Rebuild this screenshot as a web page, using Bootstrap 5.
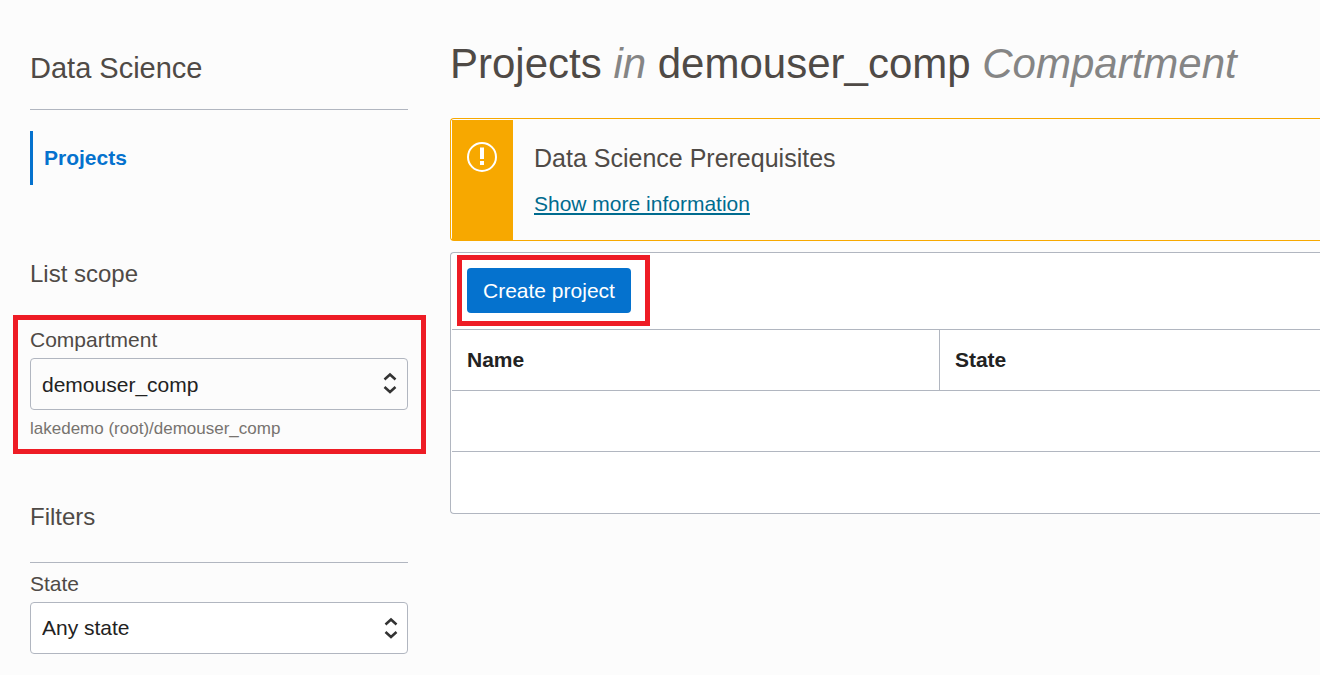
<!DOCTYPE html>
<html lang="en">
<head>
<meta charset="utf-8">
<meta name="viewport" content="width=device-width, initial-scale=1">
<title>Data Science - Projects</title>
<link href="https://cdn.jsdelivr.net/npm/bootstrap@5.3.0/dist/css/bootstrap.min.css" rel="stylesheet">
<style>
  :root { --ink: #4f4a46; --line: #b1b6c0; --blue: #0572ce; --amber: #f7a800; --frame: #ee1c25; }
  body { background: #fcfcfc; color: var(--ink); font-family: "Liberation Sans", Arial, sans-serif; font-size: 21px; line-height: 24px; }
  h1, h2, h3 { font-weight: 400; margin: 0; color: var(--ink); }

  .page-shell { gap: 42px; padding-left: 30px; }
  .side-panel { flex: 0 0 378px; padding: 50px 0 21px; min-width: 0; }
  .service-title { font-size: 29px; line-height: 36px; padding-bottom: 23px; border-bottom: 1px solid var(--line); }
  .side-title { font-size: 24px; line-height: 32px; }
  .side-nav { margin: 21px 0 73px; }
  .side-nav .nav-link { border-left: 3px solid var(--blue); padding: 15px 0 15px 11px; font-weight: 700; color: var(--blue); }

  .framed { border: 5px solid var(--frame); }
  .scope-frame { margin: 25px -18px 47px -17px; padding: 8px 13px 10px 12px; }
  .form-label { margin-bottom: 6px; display: block; }
  .picker {
    height: 52px; padding: 0 40px 0 11px; font-size: 21px; line-height: 24px; color: #222; border: 1px solid var(--line); border-radius: 4px;
    background-color: #fff; background-position: right 4px center; background-size: 24px 24px;
    background-image: url("data:image/svg+xml,%3csvg xmlns='http://www.w3.org/2000/svg' viewBox='0 0 24 24'%3e%3cpath d='M6.500 8.500L12 3.500L17.500 8.500M6.500 16L12 21L17.500 16' fill='none' stroke='%23333' stroke-width='2.500'/%3e%3c/svg%3e");
  }
  .picker-plain { background-color: #fcfcfc; background-position: right 5px top 12px; padding-top: 2px; }
  .form-text { font-size: 17px; line-height: 20px; margin-top: 9px; color: #77736f; }
  .filter-title { padding-bottom: 29px; border-bottom: 1px solid var(--line); margin-bottom: 9px; }

  .main-panel { padding-top: 40px; min-width: 0; }
  .page-title { font-size: 42px; line-height: 48px; margin-bottom: 30px; }
  .page-title em { color: #858585; }

  .notice { border: 1px solid var(--amber); border-right: 0; border-radius: 4px 0 0 4px; padding: 1px 0 0 1px; }
  .notice-mark { flex: 0 0 61px; background: var(--amber); padding: 22px 0 0 15px; }
  .notice-body { padding: 22px 21px 24px; }
  .notice-title { font-size: 25px; line-height: 32px; margin-bottom: 18px; }
  .notice-link { color: #006b8f; text-decoration: underline; text-decoration-thickness: 2px; text-underline-offset: 2px; text-decoration-skip-ink: none; }

  .list-card { margin-top: 11px; background: #fff; border: 1px solid var(--line); border-right: 0; border-radius: 4px 0 0 4px; padding-left: 1px; }
  .list-tools { border-bottom: 1px solid var(--line); padding: 2px 0 3px 5px; }
  .create-frame { padding: 8px 14px 8px 5px; }
  .create-btn { background: var(--blue); color: #fff; border: 0; border-radius: 4px; font-size: 21px; line-height: 24px; padding: 11px 16px 10px; }
  .create-btn:hover { background: #045fab; color: #fff; }
  .list-table { table-layout: fixed; border-collapse: separate; border-spacing: 0; margin: 0; }
  .list-table th, .list-table td { height: 61px; padding: 0 15px; vertical-align: middle; border-bottom: 1px solid var(--line); color: #222; background: transparent; }
  .list-table tbody tr:last-child td { border-bottom: 0; }
  .list-table th + th { border-left: 1px solid var(--line); }
  .name-col { width: 56.1%; }

  @media (max-width: 767px) { .side-panel { flex-basis: auto; padding-right: 30px; } }
</style>
</head>
<body>
<div class="page-shell d-flex flex-column flex-md-row">
  <aside class="side-panel">
    <h2 class="service-title">Data Science</h2>
    <nav class="side-nav nav flex-column" aria-label="Data Science">
      <a class="nav-link active" aria-current="page" href="#projects">Projects</a>
    </nav>

    <h3 class="side-title">List scope</h3>
    <div class="framed scope-frame">
      <label class="form-label" for="compartment">Compartment</label>
      <select class="form-select picker picker-plain" id="compartment" aria-describedby="compartment-path">
        <option selected>demouser_comp</option>
      </select>
      <div class="form-text" id="compartment-path">lakedemo (root)/demouser_comp</div>
    </div>

    <h3 class="side-title filter-title">Filters</h3>
    <label class="form-label" for="state">State</label>
    <select class="form-select picker" id="state">
      <option selected>Any state</option>
    </select>
  </aside>

  <main class="main-panel flex-grow-1" id="projects">
    <h1 class="page-title">Projects <em>in</em> demouser_comp <em>Compartment</em></h1>

    <section class="notice d-flex">
      <div class="notice-mark">
        <svg class="d-block" width="30" height="30" viewBox="0 0 30 30" aria-hidden="true">
          <circle cx="15" cy="15" r="14" fill="none" stroke="#fff" stroke-width="2"/>
          <path d="M13 5.500h4v11.500h-4zM13 19h4v4h-4z" fill="#fff"/>
        </svg>
      </div>
      <div class="notice-body">
        <h2 class="notice-title">Data Science Prerequisites</h2>
        <a class="notice-link d-inline-block" href="#prerequisites">Show more information</a>
      </div>
    </section>

    <section class="list-card">
      <div class="list-tools d-flex">
        <div class="framed create-frame d-flex">
          <button type="button" class="btn create-btn">Create project</button>
        </div>
      </div>
      <table class="table list-table">
        <thead>
          <tr><th class="name-col" scope="col">Name</th><th scope="col">State</th></tr>
        </thead>
        <tbody>
          <tr><td colspan="2"></td></tr>
          <tr><td colspan="2"></td></tr>
        </tbody>
      </table>
    </section>
  </main>
</div>
<script src="https://cdn.jsdelivr.net/npm/bootstrap@5.3.0/dist/js/bootstrap.bundle.min.js"></script>
</body>
</html>
